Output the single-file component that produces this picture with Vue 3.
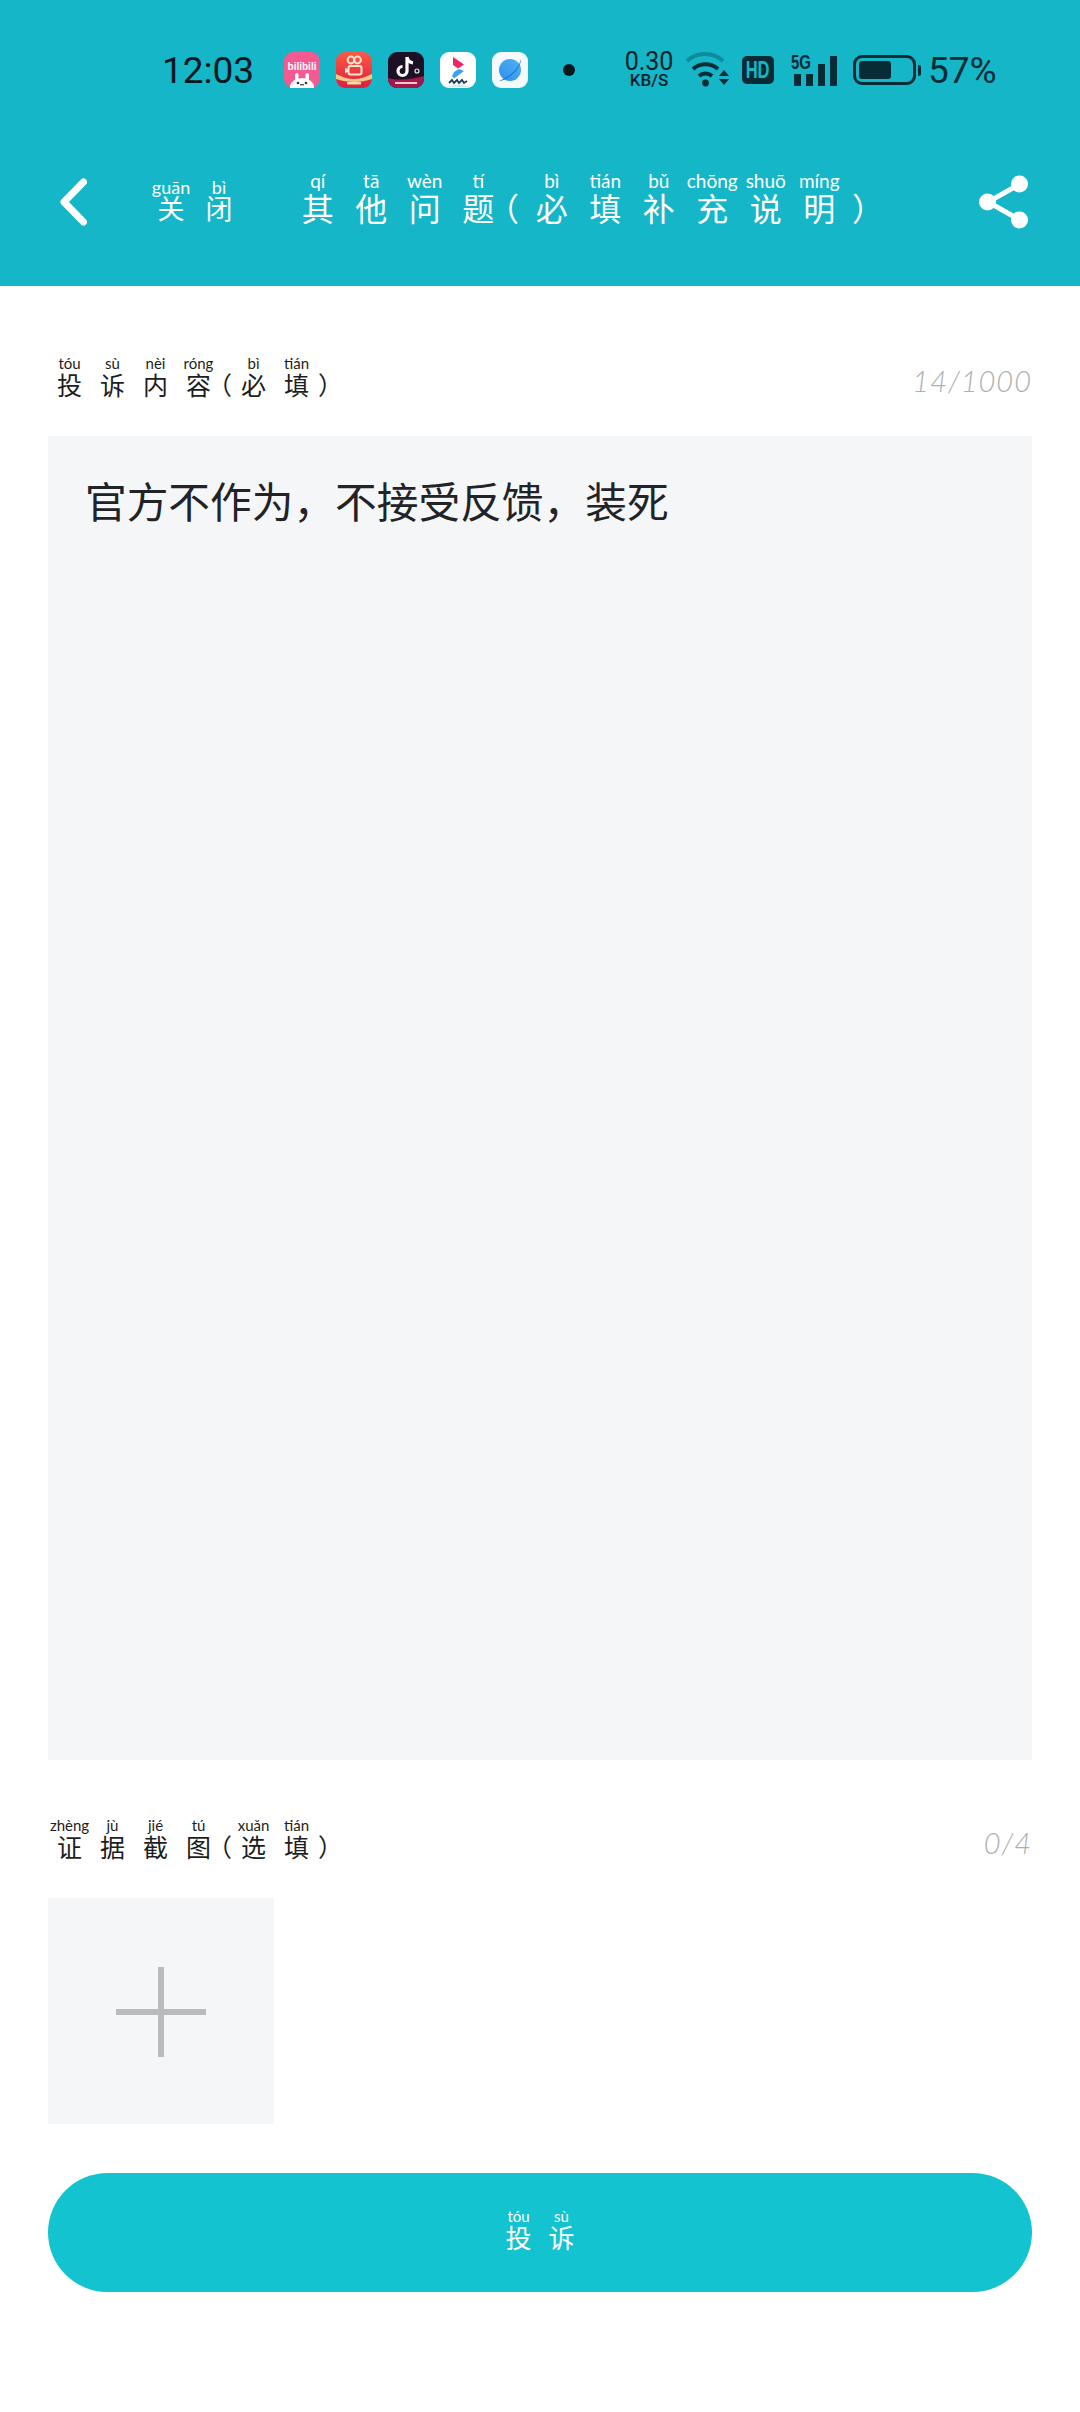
<template>
  <div class="page">
    <header class="header">
      <div class="status">
        <span class="time">12:03</span>
        <div class="apps">
          <svg class="app" viewBox="0 0 36 36">
            <rect width="36" height="36" rx="9" fill="#f4598f"/>
            <text x="18" y="18" text-anchor="middle" class="app-word">bilibili</text>
            <ellipse cx="18" cy="35" rx="12" ry="9" fill="#fff"/>
            <rect x="11" y="21" width="3.500" height="8" rx="1.700" fill="#fff"/>
            <rect x="21.500" y="21" width="3.500" height="8" rx="1.700" fill="#fff"/>
            <circle cx="14" cy="31" r="1.300" fill="#333"/>
            <circle cx="22" cy="31" r="1.300" fill="#333"/>
            <rect x="16" y="32" width="4" height="1.400" fill="#555"/>
          </svg>
          <svg class="app" viewBox="0 0 36 36">
            <defs>
              <linearGradient id="ks" x1="0" y1="0" x2="0" y2="1">
                <stop offset="0" stop-color="#fb5a45"/>
                <stop offset="1" stop-color="#dc1f3e"/>
              </linearGradient>
            </defs>
            <rect width="36" height="36" rx="9" fill="url(#ks)"/>
            <circle cx="15" cy="8" r="3.400" fill="none" stroke="#ffe8cf" stroke-width="2"/>
            <circle cx="21.500" cy="8" r="3.400" fill="none" stroke="#ffe8cf" stroke-width="2"/>
            <rect x="12.500" y="14" width="13" height="8.500" rx="2" fill="none" stroke="#ffe8cf" stroke-width="2"/>
            <path d="M9 15.500l3 2v2l-3 2z" fill="#ffe8cf"/>
            <path d="M0 22c6 3 12 5 18 5s12-2 18-5v5c-6 2-12 3-18 3S6 29 0 27z" fill="#f2c98c"/>
            <rect x="11" y="30" width="14" height="2.500" fill="#f7d6a8"/>
          </svg>
          <svg class="app" viewBox="0 0 36 36">
            <rect width="36" height="36" rx="9" fill="#1d0f24"/>
            <path d="M0 26c12 3 24 1 36-2v3a9 9 0 0 1-9 9H9a9 9 0 0 1-9-9z" fill="#a3174a"/>
            <path d="M19 5v14a4.500 4.500 0 1 1-4.500-4.500M19 5c.5 3.500 3 5.500 6 5.800" fill="none" stroke="#fff" stroke-width="3.200"/>
            <circle cx="29" cy="19" r="2" fill="none" stroke="#e8e8e8" stroke-width="1.200"/>
            <rect x="7" y="30" width="22" height="2" fill="#f3c5d0"/>
          </svg>
          <svg class="app" viewBox="0 0 36 36">
            <rect width="36" height="36" rx="9" fill="#fff"/>
            <path d="M13 5l11 7.500-6 4-5-3.500z" fill="#f0245f"/>
            <path d="M19 17l5 2-10 7.500-2-2.500 2-4z" fill="#36a4f2"/>
            <path d="M7 35c7-3 15-3 22 0z" fill="#cfeaf7"/>
            <path d="M9 31l3-3 2 3 3-3 2 3 3-3 2 3 3-2" fill="none" stroke="#23405c" stroke-width="1.800"/>
          </svg>
          <svg class="app" viewBox="0 0 36 36">
            <defs>
              <linearGradient id="planet" x1="0" y1="1" x2="1" y2="0">
                <stop offset="0" stop-color="#2f8eef"/>
                <stop offset="1" stop-color="#4cb4f0"/>
              </linearGradient>
            </defs>
            <rect width="36" height="36" rx="9" fill="#f4fafe"/>
            <circle cx="18" cy="18" r="11" fill="url(#planet)"/>
            <path d="M7 29c4 0 10-3 15-8s7-10 7-14c-2 7-6 12-10 15s-8 5-12 7z" fill="#1f79dd"/>
          </svg>
        </div>
        <span class="dot"></span>
        <div class="speed">
          <span class="speed-num">0.30</span>
          <span class="speed-unit">KB/S</span>
        </div>
        <svg class="wifi" viewBox="0 0 46 36">
          <path d="M2 9a27 27 0 0 1 36 0" fill="none" stroke="#0d8b9c" stroke-width="4"/>
          <path d="M8 17a19 19 0 0 1 25 0" fill="none" stroke="#072c36" stroke-width="4"/>
          <path d="M14 24a10 10 0 0 1 13 0" fill="none" stroke="#072c36" stroke-width="4"/>
          <circle cx="20.500" cy="31" r="3.400" fill="#072c36"/>
          <path d="M39 18l5 6H34zM34 27h10l-5 6z" fill="#072c36"/>
        </svg>
        <span class="hd"><span class="hd-text">HD</span></span>
        <div class="signal">
          <span class="five-g">5G</span>
          <i class="bar bar-1"></i>
          <i class="bar bar-2"></i>
          <i class="bar bar-3"></i>
          <i class="bar bar-4"></i>
        </div>
        <div class="battery"><i class="battery-level"></i></div>
        <span class="percent">57%</span>
      </div>

      <nav class="nav">
        <svg class="back" viewBox="0 0 27 48">
          <path d="M23.500 4L4 24l19.500 20" fill="none" stroke="#fff" stroke-width="7" stroke-linecap="round" stroke-linejoin="round"/>
        </svg>
        <div class="ruby-row ruby-close">
          <span v-for="c in closeText" :key="c.zh" class="cell">
            <span class="py">{{ c.py }}</span>
            <span class="zh">{{ c.zh }}</span>
          </span>
        </div>
        <div class="ruby-row ruby-title">
          <span v-for="(c, i) in titleText" :key="i" class="cell" :class="parenClass(c)">
            <span class="py">{{ c.py }}</span>
            <span class="zh">{{ c.zh }}</span>
          </span>
        </div>
        <svg class="share" viewBox="0 0 50 54">
          <path d="M41 9L9 27l32 18" fill="none" stroke="#fff" stroke-width="5"/>
          <circle cx="40.500" cy="9" r="8.500" fill="#fff"/>
          <circle cx="8.500" cy="27" r="8.500" fill="#fff"/>
          <circle cx="40.500" cy="45" r="8.500" fill="#fff"/>
        </svg>
      </nav>
    </header>

    <main class="form">
      <div class="field-head">
        <div class="ruby-row ruby-label">
          <span v-for="(c, i) in contentLabel" :key="i" class="cell" :class="parenClass(c)">
            <span class="py">{{ c.py }}</span>
            <span class="zh">{{ c.zh }}</span>
          </span>
        </div>
        <span class="count">14/1000</span>
      </div>
      <div class="content-box">官方不作为，不接受反馈，装死</div>

      <div class="field-head shots-head">
        <div class="ruby-row ruby-label">
          <span v-for="(c, i) in shotLabel" :key="i" class="cell" :class="parenClass(c)">
            <span class="py">{{ c.py }}</span>
            <span class="zh">{{ c.zh }}</span>
          </span>
        </div>
        <span class="count">0/4</span>
      </div>
      <div class="add-shot"><i class="plus-h"></i><i class="plus-v"></i></div>

      <button class="submit">
        <span class="ruby-row ruby-submit">
          <span v-for="c in submitText" :key="c.zh" class="cell">
            <span class="py">{{ c.py }}</span>
            <span class="zh">{{ c.zh }}</span>
          </span>
        </span>
      </button>
    </main>
  </div>
</template>

<script setup>
const closeText = [
  { py: 'guān', zh: '关' },
  { py: 'bì', zh: '闭' },
]
const titleText = [
  { py: 'qí', zh: '其' },
  { py: 'tā', zh: '他' },
  { py: 'wèn', zh: '问' },
  { py: 'tí', zh: '题' },
  { py: '', zh: '（' },
  { py: 'bì', zh: '必' },
  { py: 'tián', zh: '填' },
  { py: 'bǔ', zh: '补' },
  { py: 'chōng', zh: '充' },
  { py: 'shuō', zh: '说' },
  { py: 'míng', zh: '明' },
  { py: '', zh: '）' },
]
const contentLabel = [
  { py: 'tóu', zh: '投' },
  { py: 'sù', zh: '诉' },
  { py: 'nèi', zh: '内' },
  { py: 'róng', zh: '容' },
  { py: '', zh: '（' },
  { py: 'bì', zh: '必' },
  { py: 'tián', zh: '填' },
  { py: '', zh: '）' },
]
const shotLabel = [
  { py: 'zhèng', zh: '证' },
  { py: 'jù', zh: '据' },
  { py: 'jié', zh: '截' },
  { py: 'tú', zh: '图' },
  { py: '', zh: '（' },
  { py: 'xuǎn', zh: '选' },
  { py: 'tián', zh: '填' },
  { py: '', zh: '）' },
]
const submitText = [
  { py: 'tóu', zh: '投' },
  { py: 'sù', zh: '诉' },
]

function parenClass(c) {
  if (c.zh === '（') return 'open'
  if (c.zh === '）') return 'shut'
  return ''
}
</script>

<style scoped>
.page {
  width: 1080px;
  height: 2412px;
  background: #fff;
  font-family: "Noto Sans CJK SC", "Noto Sans", sans-serif;
  color: #1c1e21;
}

.header {
  height: 286px;
  background: #14b6c8;
}

.status {
  height: 140px;
  display: flex;
  align-items: center;
  padding-left: 162px;
  color: #072c36;
}
.time {
  width: 122px;
  font: 400 37px/1 Roboto, sans-serif;
  color: #05181e;
}
.apps {
  display: flex;
  gap: 16px;
  width: 279px;
}
.app {
  width: 36px;
  height: 36px;
  display: block;
}
.app-word {
  font: 700 10px "Liberation Sans", sans-serif;
  fill: #fff;
}
.dot {
  width: 12px;
  height: 12px;
  border-radius: 50%;
  background: #05181e;
}
.speed {
  margin-left: 49px;
  width: 50px;
  display: flex;
  flex-direction: column;
  align-items: center;
  font-family: Roboto, sans-serif;
  color: #05202a;
}
.speed-num {
  font-size: 25px;
  line-height: 21px;
  font-weight: 400;
}
.speed-unit {
  font-size: 17px;
  line-height: 17px;
  font-weight: 500;
}
.wifi {
  width: 46px;
  height: 36px;
  margin-left: 11px;
}
.hd {
  display: flex;
  justify-content: center;
  width: 32px;
  height: 28px;
  margin-left: 11px;
  border-radius: 5px;
  background: #072c36;
  color: #14b6c8;
  font: 700 23px/28px "Liberation Sans", sans-serif;
}
.hd-text {
  transform: scaleX(0.72);
}
.signal {
  position: relative;
  width: 46px;
  height: 32px;
  margin-left: 17px;
}
.five-g {
  position: absolute;
  left: 0;
  top: -2px;
  font: 700 20px/20px "Liberation Sans", sans-serif;
  color: #072c36;
  transform: scaleX(0.75);
  transform-origin: left;
}
.bar {
  position: absolute;
  bottom: 0;
  width: 7px;
  background: #072c36;
}
.bar-1 { left: 3px; height: 12px; }
.bar-2 { left: 15px; height: 12px; }
.bar-3 { left: 27px; height: 22px; }
.bar-4 { left: 39px; height: 30px; }
.battery {
  position: relative;
  width: 63px;
  height: 30px;
  margin-left: 16px;
  box-sizing: border-box;
  border: 3px solid #072c36;
  border-radius: 9px;
  padding: 3px;
}
.battery::after {
  content: "";
  position: absolute;
  right: -8px;
  top: 7px;
  width: 3px;
  height: 11px;
  border-radius: 0 2px 2px 0;
  background: #072c36;
}
.battery-level {
  display: block;
  width: 32px;
  height: 100%;
  border-radius: 3px;
  background: #072c36;
}
.percent {
  margin-left: 12px;
  font: 400 37px/1 Roboto, sans-serif;
}

.nav {
  height: 124px;
  display: flex;
  align-items: center;
  padding-left: 60px;
}
.back {
  width: 27px;
  height: 48px;
}
.share {
  width: 50px;
  height: 54px;
  margin-left: 113px;
}

.ruby-row {
  display: flex;
}
.cell {
  display: flex;
  flex-direction: column;
  align-items: center;
  flex: none;
}
.py {
  white-space: nowrap;
  font-family: Lato, "Noto Sans", sans-serif;
}
.zh {
  white-space: nowrap;
}
.cell.open {
  align-items: flex-end;
}
.cell.shut {
  align-items: flex-start;
}

.ruby-close,
.ruby-title {
  color: #fff;
}
.ruby-close {
  margin-left: 60px;
  margin-bottom: 9px;
}
.ruby-close .cell {
  width: 48px;
}
.ruby-close .py {
  height: 20px;
  font-size: 18px;
  line-height: 20px;
}
.ruby-close .zh {
  font-size: 27px;
  line-height: 22px;
}
.ruby-title {
  margin-left: 48px;
  margin-bottom: 12px;
}
.ruby-title .cell {
  width: 53.500px;
}
.ruby-title .cell.open,
.ruby-title .cell.shut {
  width: 20px;
}
.ruby-title .cell.open .zh {
  margin-right: 6px;
}
.ruby-title .cell.shut .zh {
  margin-left: 6px;
}
.ruby-title .py {
  height: 21px;
  font-size: 19px;
  line-height: 21px;
}
.ruby-title .zh {
  font-size: 32px;
  line-height: 32px;
}

.form {
  padding: 69px 48px 0;
}
.field-head {
  display: flex;
  justify-content: space-between;
  align-items: flex-start;
  height: 46px;
}
.shots-head {
  margin-top: 57px;
}
.ruby-label .cell {
  width: 43px;
}
.ruby-label .cell.open,
.ruby-label .cell.shut {
  width: 12px;
}
.ruby-label .py {
  height: 16px;
  font-size: 15px;
  line-height: 16px;
}
.ruby-label .zh {
  font-size: 25px;
  line-height: 26px;
}
.count {
  align-self: flex-end;
  font: italic 300 29px/40px Lato, sans-serif;
  letter-spacing: 1px;
  color: #adafb0;
}
.content-box {
  margin-top: 35px;
  height: 1324px;
  box-sizing: border-box;
  padding: 38px 37px;
  background: #f5f6f8;
  font-size: 41.700px;
  line-height: 52px;
  color: #212326;
}
.add-shot {
  position: relative;
  margin-top: 35px;
  width: 226px;
  height: 226px;
  background: #f5f6f8;
}
.plus-h,
.plus-v {
  position: absolute;
  background: #b8bcbe;
}
.plus-h {
  left: 68px;
  top: 111px;
  width: 90px;
  height: 6px;
}
.plus-v {
  left: 110px;
  top: 69px;
  width: 6px;
  height: 90px;
}
.submit {
  display: flex;
  align-items: center;
  justify-content: center;
  width: 984px;
  height: 119px;
  margin-top: 49px;
  border: 0;
  border-radius: 60px;
  background: #13c3cf;
  color: #fff;
  font-family: inherit;
}
.ruby-submit {
  margin-bottom: 8px;
}
.ruby-submit .cell {
  width: 43px;
}
.ruby-submit .py {
  height: 16px;
  font-size: 15px;
  line-height: 16px;
}
.ruby-submit .zh {
  font-size: 26px;
  line-height: 26px;
}
</style>

<style>
html, body {
  margin: 0;
  background: #fff;
}
</style>
